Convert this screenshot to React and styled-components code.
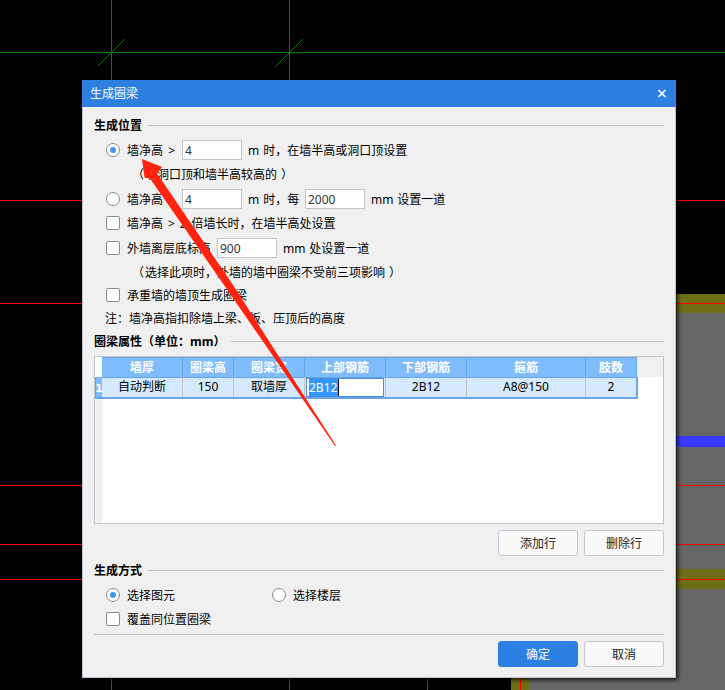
import React from "react";
import styled, { createGlobalStyle, css } from "styled-components";

const Global = createGlobalStyle`
  * { box-sizing: border-box; }
  body { margin: 0; background: #000; overflow: hidden; }
`;

const Workspace = styled.div`
  position: relative;
  width: 725px;
  height: 690px;
  overflow: hidden;
  background: #000;
  color: #000;
  font: 12px/18px "Noto Sans", "Noto Sans CJK SC", sans-serif;
`;

const Overlay = styled.svg`
  position: absolute;
  inset: 0;
  display: block;
  pointer-events: none;
`;

const Dialog = styled.section`
  position: absolute;
  left: 82px;
  top: 80px;
  width: 594px;
  height: 598px;
  display: flex;
  flex-direction: column;
  background: #f0f0f0;
  box-shadow: inset 0 0 0 1px #bcc3cf, 2px 2px 4px rgba(0, 0, 0, 0.75);
`;

const TitleBar = styled.header`
  flex: none;
  display: flex;
  align-items: center;
  justify-content: space-between;
  height: 27px;
  padding: 0 9px 0 8px;
  background: #2d80e2;
  color: #fff;
`;

const CloseButton = styled.button`
  display: flex;
  padding: 0;
  border: 0;
  background: none;
`;

const Body = styled.div`
  display: flex;
  flex-direction: column;
  padding: 6px 12px 0;
`;

const SectionTitle = styled.h2`
  display: flex;
  align-items: center;
  height: ${(p) => p.$height}px;
  margin: ${(p) => p.$top ?? 0}px 0 0;
  padding-top: 1px;
  font-size: 12px;
  font-weight: 700;
  white-space: pre;
  &::after {
    content: "";
    flex: 1;
    height: 1px;
    margin: 0 0 1px 6px;
    background: #c3c4c7;
  }
`;

const Row = styled.div`
  display: flex;
  align-items: center;
  height: ${(p) => p.$height ?? 24}px;
  margin-bottom: ${(p) => p.$after ?? 0}px;
  padding-left: ${(p) => p.$indent ?? 12}px;
  white-space: pre;
`;

const mark = css`
  flex: none;
  width: 14px;
  height: 14px;
  margin-right: 7px;
  border: 1px solid #8b8b8b;
  background: #fff;
`;

const Radio = styled.span`
  ${mark}
  display: grid;
  place-items: center;
  border-radius: 50%;
  &::after {
    content: "";
    width: 6px;
    height: 6px;
    border-radius: 50%;
    background: ${(p) => (p.$on ? "#3f98f7" : "transparent")};
  }
`;

const Check = styled.span`
  ${mark}
  border-radius: 2px;
`;

const Label = styled.span`
  flex: none;
  width: ${(p) => (p.$width ? `${p.$width}px` : "auto")};
  padding-top: 2px;
  word-spacing: ${(p) => p.$space ?? 0.8}px;
`;

const Paren = styled.span`
  margin: 0 ${(p) => -p.$shift}px 0 ${(p) => p.$shift}px;
`;

const Field = styled.input`
  width: 60px;
  height: 20px;
  margin: 0 6px 0 0;
  padding: 0 2px;
  border: 1px solid #c0c3cb;
  outline: 0;
  background: #fff;
  color: #333;
  font: inherit;
`;

const columns = "7px 81px 51px 71px 81px 81px 119px 51px";

const Table = styled.div`
  height: 168px;
  margin-top: 4px;
  border: 1px solid #c3c4c7;
  background: linear-gradient(90deg, #f0f0f0 7px, #fff 7px);
`;

const HeadRow = styled.div`
  display: grid;
  grid-template-columns: ${columns} 1fr;
  height: 20px;
  background: #f0f0f0;
`;

const HeadCell = styled.div`
  display: flex;
  align-items: center;
  justify-content: center;
  padding-top: 1px;
  border: solid #67a5e6;
  border-width: 1px 1px 1px 0;
  background: #80bbfb;
  color: #fff;
  font-weight: 700;
`;

const Corner = styled.div`
  background: #fff;
`;

const DataRow = styled.div`
  display: grid;
  grid-template-columns: ${columns};
  width: 543px;
  height: 22px;
  border: solid #67a5e6;
  border-width: 0 1px 2px 0;
  background: #d6eaff;
`;

const RowNumber = styled.div`
  overflow: hidden;
  padding-top: 2px;
  border: solid #67a5e6;
  border-width: 1px 0 0 1px;
  background: #80bbfb;
  color: #fff;
  font-family: "DejaVu Sans", sans-serif;
  font-size: 11px;
  font-weight: 700;
  text-indent: -1px;
`;

const Cell = styled.div`
  display: flex;
  align-items: center;
  justify-content: center;
  border-right: 1px solid ${(p) => (p.$last ? "#67a5e6" : "#c3c4c7")};
`;

const Editor = styled.div`
  display: flex;
  width: 78px;
  height: 19px;
  padding: 0 2px;
  border: 1px solid #5288dc;
  background: #fff;
`;

const Selection = styled.span`
  width: 30px;
  height: 17px;
  border-right: 1px solid #000;
  background: #3397fd;
  color: #fff;
  line-height: 17px;
`;

const Actions = styled.div`
  display: flex;
  justify-content: flex-end;
  gap: 6px;
  margin-top: 6px;
`;

const Button = styled.button`
  width: 80px;
  height: 26px;
  padding: 1px 0 0;
  border: 1px solid ${(p) => (p.$primary ? "#2d80e2" : "#c0c7d5")};
  border-radius: 3px;
  background: ${(p) => (p.$primary ? "#2d80e2" : "#fafafa")};
  color: ${(p) => (p.$primary ? "#fff" : "#222")};
  font: inherit;
`;

const Divider = styled.div`
  height: 1px;
  margin-top: 6px;
  background: #c3c4c7;
`;

const headers = ["墙厚", "圈梁高", "圈梁宽", "上部钢筋", "下部钢筋", "箍筋", "肢数"];
const values = ["自动判断", "150", "取墙厚", "2B12", "2B12", "A8@150", "2"];

function Drawing() {
  return (
    <Overlay width="725" height="690" shapeRendering="crispEdges">
      <path fill="#666" d="M530 313H725V690H530Z" />
      <path fill="#6e6e16" d="M511 294H725V313H530V569H725V589H530V690H511Z" />
      <path fill="#3838ff" d="M530 436H725V447H530Z" />
      <path stroke="#008000" fill="none" d="M0 52.5H725M111.5 0V90M289.5 0V90" />
      <path stroke="#008000" fill="none" d="M98 66L125 39M275 67L303 39" />
      <path
        stroke="#f00"
        fill="none"
        d="M0 200.5H725M0 303.5H725M0 485.5H725M0 544.5H725M0 579.5H725M111.5 600V690M289.5 600V690M427.5 600V690M520.5 600V690"
      />
    </Overlay>
  );
}

export default function App() {
  return (
    <Workspace>
      <Global />
      <Drawing />
      <Dialog>
        <TitleBar>
          <span>生成圈梁</span>
          <CloseButton aria-label="关闭">
            <svg width="10" height="9" viewBox="0 0 10 9">
              <path d="M1.5 1L8.5 8M8.5 1L1.5 8" stroke="#fff" strokeWidth="1.7" />
            </svg>
          </CloseButton>
        </TitleBar>
        <Body>
          <SectionTitle $height={25}>生成位置</SectionTitle>
          <Row>
            <Radio $on />
            <Label $width={55} $space={2}>墙净高 {">"}</Label>
            <Field defaultValue="4" />
            <Label>m 时，在墙半高或洞口顶设置</Label>
          </Row>
          <Row $after={1} $indent={39}>
            <Label>
              <Paren $shift={-1}>（</Paren>取洞口顶和墙半高较高的<Paren $shift={4}>）</Paren>
            </Label>
          </Row>
          <Row>
            <Radio />
            <Label $width={55} $space={2}>墙净高 {">"}</Label>
            <Field defaultValue="4" />
            <Label $width={57}>m 时，每</Label>
            <Field defaultValue="2000" />
            <Label>mm 设置一道</Label>
          </Row>
          <Row $after={1}>
            <Check />
            <Label $space={1.8}>墙净高 {">"} 2 倍墙长时，在墙半高处设置</Label>
          </Row>
          <Row>
            <Check />
            <Label $width={90}>外墙离层底标高</Label>
            <Field defaultValue="900" />
            <Label>mm 处设置一道</Label>
          </Row>
          <Row $indent={39}>
            <Label>
              <Paren $shift={-1}>（</Paren>选择此项时，外墙的墙中圈梁不受前三项影响<Paren $shift={4}>）</Paren>
            </Label>
          </Row>
          <Row $height={22}>
            <Check />
            <Label>承重墙的墙顶生成圈梁</Label>
          </Row>
          <Row $after={1} $indent={11}>
            <Label>注：墙净高指扣除墙上梁、板、压顶后的高度</Label>
          </Row>
          <SectionTitle $height={21}>圈梁属性（单位：mm）</SectionTitle>
          <Table>
            <HeadRow>
              <Corner />
              {headers.map((h) => (
                <HeadCell key={h}>{h}</HeadCell>
              ))}
            </HeadRow>
            <DataRow>
              <RowNumber>1</RowNumber>
              {values.map((v, i) => (
                <Cell key={i} $last={i === values.length - 1}>
                  {i === 3 ? (
                    <Editor>
                      <Selection>{v}</Selection>
                    </Editor>
                  ) : (
                    v
                  )}
                </Cell>
              ))}
            </DataRow>
          </Table>
          <Actions>
            <Button>添加行</Button>
            <Button>删除行</Button>
          </Actions>
          <SectionTitle $height={19} $top={5}>生成方式</SectionTitle>
          <Row $height={30}>
            <Radio $on />
            <Label $width={145}>选择图元</Label>
            <Radio />
            <Label>选择楼层</Label>
          </Row>
          <Row $height={18}>
            <Check />
            <Label>覆盖同位置圈梁</Label>
          </Row>
          <Divider />
          <Actions>
            <Button $primary>确定</Button>
            <Button>取消</Button>
          </Actions>
        </Body>
      </Dialog>
      <Overlay width="725" height="690">
        <path
          fill="#ff2310"
          d="M142 159L162 167L157 173.5L233 285L336 445.5L335 446L224 285L150 178.5L144.5 177.5Z"
        />
      </Overlay>
    </Workspace>
  );
}
